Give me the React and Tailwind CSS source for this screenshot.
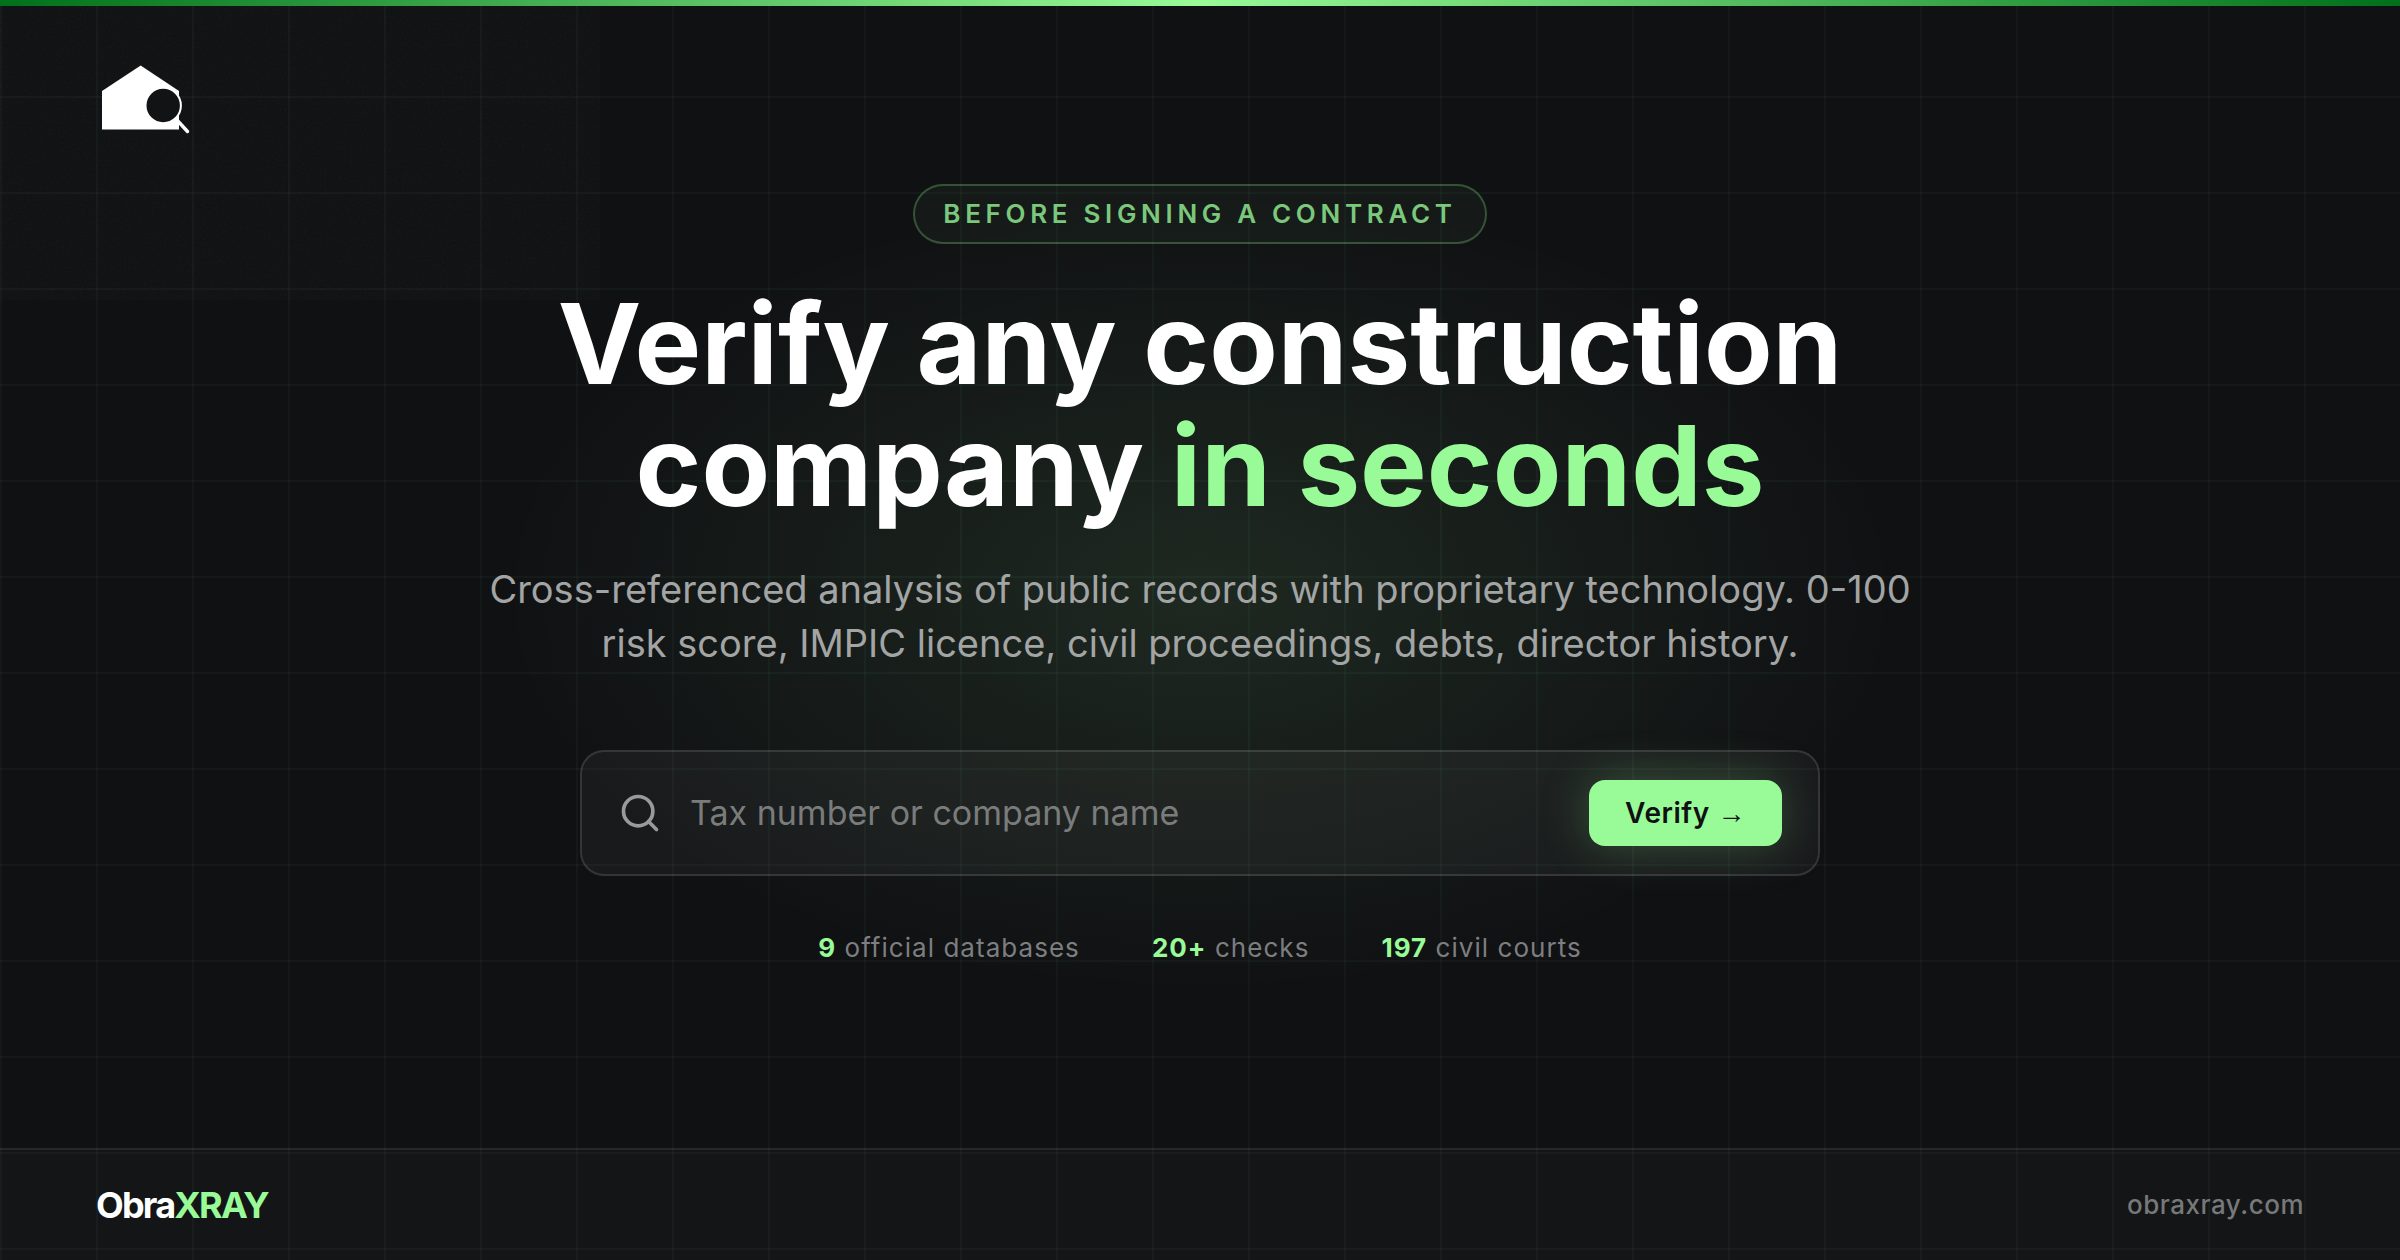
import { Search } from "lucide-react";

const STATS = [
  { value: "9", label: "official databases" },
  { value: "20+", label: "checks" },
  { value: "197", label: "civil courts" },
];

function LogoMark() {
  return (
    <svg viewBox="0 0 96 76" className="w-24 h-19" role="img" aria-label="ObraXRAY">
      <path d="M6 31 44.7 5.5 83 31V69.5H6Z" fill="#ffffff" />
      <circle cx="67.2" cy="45.5" r="17.7" fill="#111314" stroke="#ffffff" strokeWidth="2" />
      <path d="M80 59 91.5 71.5" stroke="#ffffff" strokeWidth="3.4" strokeLinecap="round" />
    </svg>
  );
}

// Faint film grain in the top left corner
function Grain() {
  return (
    <svg className="absolute top-0 left-0 -z-10 h-[300px] w-[600px] opacity-3" aria-hidden="true">
      <filter id="grain">
        <feTurbulence type="fractalNoise" baseFrequency="0.45" numOctaves="3" />
        <feColorMatrix type="saturate" values="0" />
      </filter>
      <rect width="100%" height="100%" filter="url(#grain)" />
    </svg>
  );
}

function SearchBar() {
  return (
    <form
      onSubmit={(e) => e.preventDefault()}
      className="mt-20 w-full max-w-[1240px] flex items-center gap-7 rounded-3xl border-2 border-white/12 bg-white/4 px-9 py-7"
    >
      <Search className="size-11 shrink-0 text-[#999a9c]" strokeWidth={2} />
      <input
        type="text"
        aria-label="Tax number or company name"
        placeholder="Tax number or company name"
        className="min-w-0 flex-1 bg-transparent text-[34px] leading-[48px] text-white outline-none placeholder:text-[#7a7c7c]"
      />
      <button
        type="submit"
        className="h-[66px] shrink-0 rounded-2xl bg-[#98fb98] px-9 text-[28px] leading-[34px] font-semibold tracking-[0.02em] text-[#101113] shadow-[0_0_48px_rgba(152,251,152,0.25)]"
      >
        Verify <span className="font-['Liberation_Sans',sans-serif]">→</span>
      </button>
    </form>
  );
}

export default function App() {
  return (
    <div className="relative isolate flex min-h-screen flex-col overflow-hidden bg-[#101113] font-['Inter',sans-serif]">
      {/* Backdrop: green glow with the grid over it */}
      <div className="absolute inset-0 -z-10 bg-[radial-gradient(ellipse_700px_400px_at_50%_47%,rgba(152,251,152,0.10),transparent)]" />
      <div className="absolute inset-0 -z-10 bg-[linear-gradient(rgba(120,251,170,0.04)_2px,transparent_2px),linear-gradient(90deg,rgba(120,251,170,0.04)_2px,transparent_2px)] bg-[size:96px_96px]" />
      <Grain />

      <div className="h-1.5 bg-linear-to-r/srgb from-[#00701a] via-[#98fb98] to-[#00701a]" />

      <header className="px-24 pt-[54px]">
        <LogoMark />
      </header>

      <main className="flex flex-1 flex-col items-center px-24 pt-12">
        <p className="rounded-full border-2 border-[#98fb98]/25 bg-[#98fb98]/4 px-7 py-3 text-[26px] leading-8 font-semibold tracking-[0.18em] text-[#7bc87c] uppercase">
          Before signing a contract
        </p>

        <h1 className="mt-[38px] text-center text-[112px] leading-[122px] font-bold text-white">
          Verify any construction
          <br />
          company <span className="text-[#98fb98]">in seconds</span>
        </h1>

        <p className="mt-9 max-w-[1440px] text-center text-[38px] leading-[54px] text-[#a3a5a5]">
          Cross-referenced analysis of public records with proprietary technology. 0-100 risk
          score, IMPIC licence, civil proceedings, debts, director history.
        </p>

        <SearchBar />

        <ul className="mt-14 flex gap-[72px] text-[26px] leading-8 tracking-[0.04em] text-[#7d7e80]">
          {STATS.map((stat) => (
            <li key={stat.label}>
              <strong className="font-bold text-[#98fb98]">{stat.value}</strong> {stat.label}
            </li>
          ))}
        </ul>
      </main>

      <footer className="flex h-28 items-center justify-between border-t-2 border-white/8 bg-white/2 px-24">
        <div className="text-[36px] leading-[48px] font-bold tracking-tighter text-white">
          Obra<span className="text-[#98fb98]">XRAY</span>
        </div>
        <a href="#" className="text-[26px] leading-8 font-medium tracking-[0.02em] text-[#77787a]">
          obraxray.com
        </a>
      </footer>
    </div>
  );
}
